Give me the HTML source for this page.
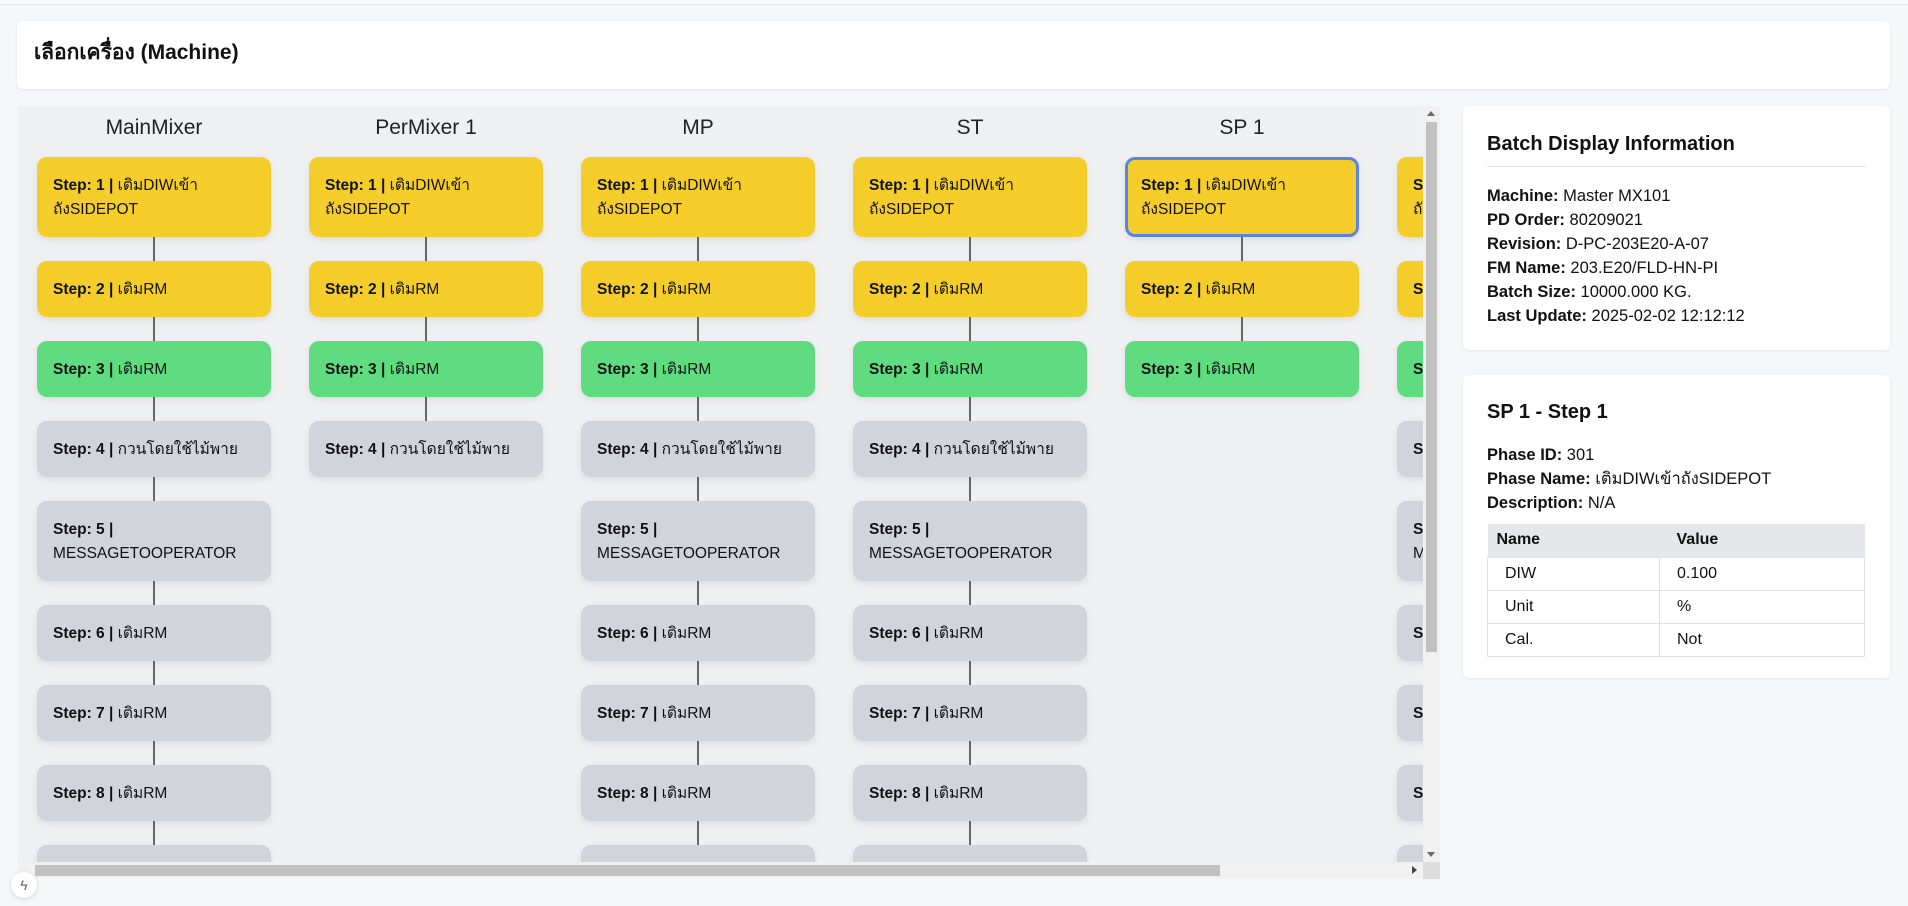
<!DOCTYPE html>
<html><head><meta charset="utf-8"><style>
*{box-sizing:border-box;margin:0;padding:0}
body{width:1908px;height:906px;background:#f6f7f9;font-family:"Liberation Sans","Noto Sans CJK SC",sans-serif;color:#111;position:relative;overflow:hidden}
.topline{position:absolute;left:0;top:0;width:1908px;height:5px;border-bottom:1px solid #e3e5e8;background:#fafafa}
.title{position:absolute;left:17px;top:21px;width:1873px;height:68px;background:#fff;border-radius:6px;box-shadow:0 1px 3px rgba(0,0,0,.08);font-weight:bold;font-size:21px;padding:15px 0 0 17px}
.flow{position:absolute;left:18px;top:106px;width:1422px;height:773px;background:#eff0f2;overflow:hidden}
.vs{position:absolute;left:1405px;top:0;width:17px;height:756px;background:#f1f1f1}
.vs .th{position:absolute;left:3px;top:16px;width:11px;height:530px;background:#c1c1c1}
.vs .ar{position:absolute;left:4px;top:5px;border:4px solid transparent;border-bottom:5px solid #666;border-top:0}
.vs .ar2{position:absolute;left:4px;top:746px;border:4px solid transparent;border-top:5px solid #666;border-bottom:0}
.hs{position:absolute;left:0;top:756px;width:1422px;height:17px;background:#f1f1f1}
.hs .th{position:absolute;left:17px;top:3px;width:1185px;height:11px;background:#c1c1c1}
.hs .ar{position:absolute;left:1394px;top:4px;border:4px solid transparent;border-left:5px solid #444;border-right:0}
.corner{position:absolute;left:1405px;top:756px;width:17px;height:17px;background:#dcdcdc}
.col{position:absolute;top:0;width:234px}
.col h3{position:absolute;top:10px;width:234px;text-align:center;font-weight:normal;font-size:21px;color:#222}
.card{position:absolute;left:0;width:234px;border-radius:10px;font-size:15.5px;padding:2px 16px 0;box-shadow:0 3px 8px rgba(0,0,0,.08);line-height:24px;display:flex;align-items:center}
.y{background:#f4cd2a}.g{background:#5fdc80}.n{background:#d1d4da}
.sel{border:3px solid #5b83e0;padding-left:13px}
.ln{position:absolute;left:116px;width:2px;height:24px;background:#666}
.clip{position:absolute;left:0;top:0;width:1405px;height:756px;overflow:hidden}
.card.t{height:80px}.card.s{height:56px}
.panel{position:absolute;left:1463px;width:427px;background:#fff;border-radius:6px;box-shadow:0 1px 3px rgba(0,0,0,.08);padding:0 24px}
.panel h2{font-size:20px;font-weight:bold}
.panel p{font-size:16.5px;line-height:24px}
table{border-collapse:collapse;width:378px;font-size:16px;margin-top:9px}
th{background:#e5e7eb;text-align:left;height:33px;padding-left:9px}
td{border:1px solid #dfe1e4;height:33px;padding-left:17px}
td+td,th+th{padding-left:17px}
.bolt{position:absolute;left:11px;top:872px;width:26px;height:26px;border-radius:50%;background:#fff;box-shadow:0 1px 4px rgba(0,0,0,.15);font-size:14px;color:#666;text-align:center;line-height:26px}
</style></head><body>
<div class="topline"></div>
<div class="title">เลือกเครื่อง (Machine)</div>
<div class="flow"><div class="clip" id="clip"></div>
<div class="vs"><div class="ar"></div><div class="th"></div><div class="ar2"></div></div><div class="hs"><div class="th"></div><div class="ar"></div></div><div class="corner"></div></div>
<div class="panel" style="top:106px;height:244px;padding-top:27px">
<h2 style="padding-bottom:10px;border-bottom:1px solid #e5e7eb;margin-bottom:17px">Batch Display Information</h2>
<p><b>Machine:</b> Master MX101</p><p><b>PD Order:</b> 80209021</p><p><b>Revision:</b> D-PC-203E20-A-07</p><p><b>FM Name:</b> 203.E20/FLD-HN-PI</p><p><b>Batch Size:</b> 10000.000 KG.</p><p><b>Last Update:</b> 2025-02-02 12:12:12</p>
</div>
<div class="panel" style="top:375px;height:303px;padding-top:26px">
<h2 style="margin-bottom:19px">SP 1 - Step 1</h2>
<p><b>Phase ID:</b> 301</p><p><b>Phase Name:</b> เติมDIWเข้าถังSIDEPOT</p><p><b>Description:</b> N/A</p>
<table><tr><th style="width:172px">Name</th><th>Value</th></tr><tr><td>DIW</td><td>0.100</td></tr><tr><td>Unit</td><td>%</td></tr><tr><td>Cal.</td><td>Not</td></tr></table>
</div>
<div class="bolt">ϟ</div>
<script>
const S=[["y","เติมDIWเข้า<br>ถังSIDEPOT",1],["y","เติมRM"],["g","เติมRM"],["n","กวนโดยใช้ไม้พาย"],["n","<br>MESSAGETOOPERATOR",1],["n","เติมRM"],["n","เติมRM"],["n","เติมRM"],["n",""]];
const cols=[["MainMixer",9],["PerMixer 1",4],["MP",9],["ST",9],["SP 1",3],["",9]];
let h="";
cols.forEach((c,i)=>{let x=19+272*i;h+=`<div class="col" style="left:${x}px"><h3>${c[0]}</h3>`;let y=51;
for(let k=0;k<c[1];k++){const s=S[k];const tall=s[2];const sel=(i==4&&k==0)?" sel":"";
const txt=s[1].startsWith("<br>")?`<b>Step: ${k+1} |</b>${s[1]}`:`<b>Step: ${k+1} |</b> ${s[1]}`;
h+=`<div class="card ${s[0]} ${tall?"t":"s"}${sel}" style="top:${y}px"><div>${txt}</div></div>`;y+=tall?80:56;
if(k<c[1]-1){h+=`<div class="ln" style="top:${y}px"></div>`;}y+=24;}
h+="</div>";});
document.getElementById("clip").innerHTML=h;
</script>
</body></html>
